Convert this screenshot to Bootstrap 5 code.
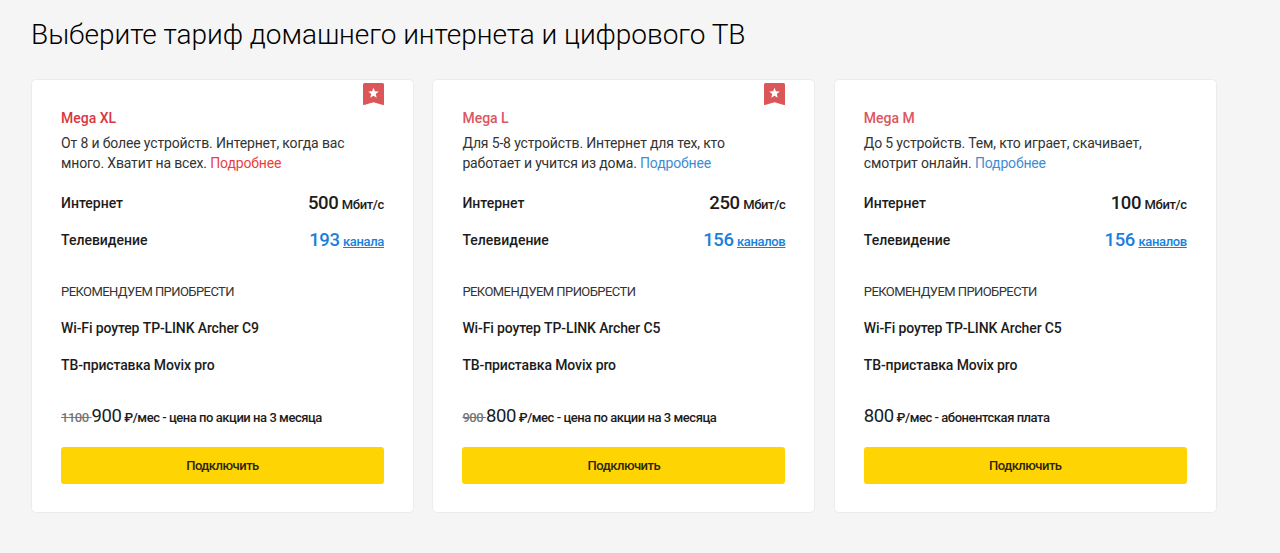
<!DOCTYPE html>
<html lang="ru">
<head>
  <meta charset="UTF-8">
  <meta name="viewport" content="width=device-width, initial-scale=1.0">
  <title>Тарифы</title>

  <!-- Bootstrap CSS -->
  <link href="https://cdn.jsdelivr.net/npm/bootstrap@5.3.3/dist/css/bootstrap.min.css" rel="stylesheet">
  <style>
    body {
      font-family: Roboto, "Liberation Sans", sans-serif;
      background: #f5f5f5;
      color: #1c1c1c;
      font-size: 14px;
      line-height: 19px;
    }

    .tariffs {
      padding-left: 31px;
      width: 1217px;
    }

    .page-title {
      font-size: 28px;
      line-height: 36px;
      font-weight: 300;
      letter-spacing: -0.04px;
      color: #000;
      padding-top: 17px;
      margin-bottom: 26px;
      white-space: nowrap;
    }

    .tariff-list {
      display: grid;
      grid-template-columns: repeat(3, 383px);
      column-gap: 18.4px;
    }

    .tariff {
      height: 434px;
      padding: 0 29px 28px;
      border: 1px solid #ececec;
      border-radius: 5px;
    }

    /* Закладка поверх карточки */
    .ribbon {
      top: 3px;
      right: 29px;
    }

    .tariff-name {
      font-size: 14px;
      font-weight: 500;
      line-height: 20px;
      margin: 28px 0 6px;
      color: #dc5560;
    }

    .tariff-name.active { color: #d9363f; }

    .about {
      color: #333;
      margin-bottom: 12px;
      letter-spacing: -0.15px;
      line-height: 19.5px;
      white-space: nowrap;
    }

    .more { color: #3f8dd0; text-decoration: none; }
    .more.active { color: #ea3f42; }

    .option {
      height: 37px;
      font-weight: 500;
    }

    .num { font-size: 18.5px; letter-spacing: -0.4px; }
    .unit { font-size: 13px; letter-spacing: -0.35px; }
    .channels, .channels a { color: #1a7fdb; }

    .device { letter-spacing: -0.12px; }

    .recommend {
      font-size: 13px;
      font-weight: 400;
      letter-spacing: -0.57px;
      color: #333;
      margin-top: 14px;
    }

    .price {
      height: 37px;
      margin-top: 13px;
      font-size: 13px;
      font-weight: 500;
      letter-spacing: -0.46px;
      line-height: 39px;
      white-space: nowrap;
    }

    .price .num { font-weight: 400; }
    .old-price { color: #777; }

    .btn-connect {
      --bs-btn-bg: #ffd403;
      --bs-btn-hover-bg: #f5cb00;
      --bs-btn-color: #2b2710;
      --bs-btn-font-size: 13px;
      --bs-btn-font-weight: 500;
      --bs-btn-border-radius: 3px;
      height: 37px;
      padding: 1px 0 0;
      letter-spacing: -0.5px;
    }
  </style>
</head>

<body>
  <main class="tariffs">
    <h1 class="page-title">Выберите тариф домашнего интернета и цифрового ТВ</h1>

    <div class="tariff-list">
      <!-- Mega XL -->
      <section class="tariff bg-white position-relative d-flex flex-column">
        <svg class="ribbon position-absolute" width="21" height="22" viewBox="0 0 21 22">
          <path fill="#db5659" d="M1.500 0h18q1.500 0 1.500 1.500V22l-2-.2-8.500-2.600L2 21.800 0 22V1.500Q0 0 1.500 0z"/>
          <path fill="#fff" d="M10.500 4.800l1.400 3.500 3.800.3-2.900 2.400.9 3.700-3.200-2-3.200 2 .9-3.700-2.900-2.400 3.800-.3z"/>
        </svg>
        <h2 class="tariff-name active">Mega XL</h2>
        <p class="about">От 8 и более устройств. Интернет, когда вас<br>много. Хватит на всех. <a class="more active" href="#">Подробнее</a></p>
        <div class="option d-flex justify-content-between align-items-center">
          <span>Интернет</span>
          <span><span class="num">500</span> <span class="unit">Мбит/с</span></span>
        </div>
        <div class="option d-flex justify-content-between align-items-center">
          <span>Телевидение</span>
          <span class="channels"><span class="num">193</span> <a class="unit" href="#">канала</a></span>
        </div>
        <div class="option recommend d-flex align-items-center">РЕКОМЕНДУЕМ ПРИОБРЕСТИ</div>
        <div class="option device d-flex align-items-center">Wi-Fi роутер TP-LINK Archer C9</div>
        <div class="option device d-flex align-items-center">ТВ-приставка Movix pro</div>
        <div class="price"><s class="old-price">1100 </s><span class="num">900</span> ₽/мес - цена по акции на 3 месяца</div>
        <button type="button" class="btn btn-connect w-100 mt-auto">Подключить</button>
      </section>

      <!-- Mega L -->
      <section class="tariff bg-white position-relative d-flex flex-column">
        <svg class="ribbon position-absolute" width="21" height="22" viewBox="0 0 21 22">
          <path fill="#db5659" d="M1.500 0h18q1.500 0 1.500 1.500V22l-2-.2-8.500-2.600L2 21.800 0 22V1.500Q0 0 1.500 0z"/>
          <path fill="#fff" d="M10.500 4.800l1.400 3.500 3.800.3-2.900 2.400.9 3.700-3.200-2-3.200 2 .9-3.700-2.900-2.400 3.800-.3z"/>
        </svg>
        <h2 class="tariff-name">Mega L</h2>
        <p class="about">Для 5-8 устройств. Интернет для тех, кто<br>работает и учится из дома. <a class="more" href="#">Подробнее</a></p>
        <div class="option d-flex justify-content-between align-items-center">
          <span>Интернет</span>
          <span><span class="num">250</span> <span class="unit">Мбит/с</span></span>
        </div>
        <div class="option d-flex justify-content-between align-items-center">
          <span>Телевидение</span>
          <span class="channels"><span class="num">156</span> <a class="unit" href="#">каналов</a></span>
        </div>
        <div class="option recommend d-flex align-items-center">РЕКОМЕНДУЕМ ПРИОБРЕСТИ</div>
        <div class="option device d-flex align-items-center">Wi-Fi роутер TP-LINK Archer C5</div>
        <div class="option device d-flex align-items-center">ТВ-приставка Movix pro</div>
        <div class="price"><s class="old-price">900 </s><span class="num">800</span> ₽/мес - цена по акции на 3 месяца</div>
        <button type="button" class="btn btn-connect w-100 mt-auto">Подключить</button>
      </section>

      <!-- Mega M -->
      <section class="tariff bg-white d-flex flex-column">
        <h2 class="tariff-name">Mega M</h2>
        <p class="about">До 5 устройств. Тем, кто играет, скачивает,<br>смотрит онлайн. <a class="more" href="#">Подробнее</a></p>
        <div class="option d-flex justify-content-between align-items-center">
          <span>Интернет</span>
          <span><span class="num">100</span> <span class="unit">Мбит/с</span></span>
        </div>
        <div class="option d-flex justify-content-between align-items-center">
          <span>Телевидение</span>
          <span class="channels"><span class="num">156</span> <a class="unit" href="#">каналов</a></span>
        </div>
        <div class="option recommend d-flex align-items-center">РЕКОМЕНДУЕМ ПРИОБРЕСТИ</div>
        <div class="option device d-flex align-items-center">Wi-Fi роутер TP-LINK Archer C5</div>
        <div class="option device d-flex align-items-center">ТВ-приставка Movix pro</div>
        <div class="price"><span class="num">800</span> ₽/мес - абонентская плата</div>
        <button type="button" class="btn btn-connect w-100 mt-auto">Подключить</button>
      </section>
    </div>
  </main>

  <script src="https://cdn.jsdelivr.net/npm/bootstrap@5.3.3/dist/js/bootstrap.bundle.min.js"></script>
</body>
</html>
